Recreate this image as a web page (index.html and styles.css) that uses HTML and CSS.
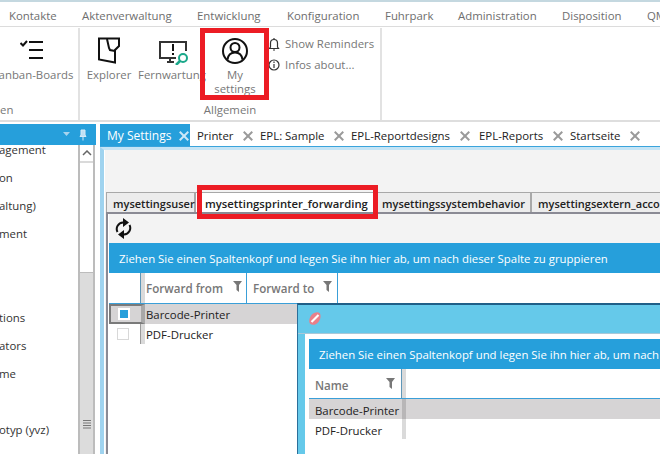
FILE: index.html
```html
<!DOCTYPE html>
<html lang="de">
<head>
<meta charset="utf-8">
<title>My Settings</title>
<link rel="stylesheet" href="styles.css">
</head>
<body>
<div class="app">
  <nav class="menu">
    <span class="m m1">Kontakte</span>
    <span class="m m2">Aktenverwaltung</span>
    <span class="m m3">Entwicklung</span>
    <span class="m m4">Konfiguration</span>
    <span class="m m5">Fuhrpark</span>
    <span class="m m6">Administration</span>
    <span class="m m7">Disposition</span>
    <span class="m m8">QM</span>
  </nav>
  <section class="ribbon">
    <div class="group g1">
      <div class="g-items g1-items">
        <div class="rbtn kanban">
          <svg class="ico" width="24" height="20" viewBox="0 0 24 20"><path d="M.5 3L3 5.500 7 1" fill="none" stroke="#111" stroke-width="2"/><path d="M9 2h14M9 10h14M9 18h14" stroke="#111" stroke-width="2"/></svg>
          <span>anban-Boards</span>
        </div>
      </div>
      <div class="g-label g1-label">en</div>
    </div>
    <div class="group g2">
      <div class="g-items g2-items">
        <div class="rbtn explorer">
          <svg class="ico" width="22" height="27" viewBox="0 0 22 27"><path d="M1 1.500H21V9L17 13V25.500L1 22.500Z" fill="none" stroke="#111" stroke-width="2"/><path d="M9 2l2 9 1 2 5 1" fill="none" stroke="#111" stroke-width="2"/></svg>
          <span>Explorer</span>
        </div>
        <div class="rbtn fern">
          <svg class="ico" width="30" height="25" viewBox="0 0 30 25"><path d="M17 18H1V2h26v9M8 22h7M11 18v4" fill="none" stroke="#333" stroke-width="2"/><path d="M14 4v7M14 13v2" stroke="#111" stroke-width="2"/><circle cx="24" cy="18" r="4" fill="#fff" stroke="#1aa88a" stroke-width="2"/><path d="M21 21l-4 4" stroke="#1aa88a" stroke-width="2.500"/></svg>
          <span>Fernwartung</span>
        </div>
        <div class="rbtn settings">
          <svg class="ico" width="26" height="26" viewBox="0 0 26 26"><circle cx="13" cy="13" r="12" fill="none" stroke="#111" stroke-width="2"/><circle cx="13" cy="9.500" r="4.500" fill="none" stroke="#111" stroke-width="2"/><path d="M5.500 21.500c.7-5 3.500-7 7.500-7s6.800 2 7.500 7" fill="none" stroke="#111" stroke-width="2"/></svg>
          <span>My<br>settings</span>
        </div>
        <div class="stack">
          <div class="srow">
            <svg width="12" height="14" viewBox="0 0 12 14"><path d="M2.500 10V6a3.500 3.500 0 0 1 7 0v4l1 1.500h-9zM5 13h2M6 1v1" fill="none" stroke="#333" stroke-width="1.200"/></svg>
            <span>Show Reminders</span>
          </div>
          <div class="srow">
            <svg width="12" height="14" viewBox="0 0 12 14"><circle cx="6" cy="7" r="5" fill="none" stroke="#333" stroke-width="1.200"/><path d="M6 6v4M6 3.500v1.500" stroke="#333" stroke-width="1.200"/></svg>
            <span>Infos about...</span>
          </div>
        </div>
      </div>
      <div class="g-label g2-label">Allgemein</div>
    </div>
  </section>
  <main class="body">
    <aside class="side">
      <div class="side-head">
        <svg width="7" height="5" viewBox="0 0 7 5"><path d="M0 0h7L3.500 4z" fill="#a8d4ee"/></svg>
        <svg class="pin" width="8" height="12" viewBox="0 0 8 12"><path d="M2 1h4v5l1 1.500H1L2 6zM4 8v3.500" fill="#bfe0f4" stroke="#d5ebf8"/></svg>
      </div>
      <div class="side-body">
        <ul class="tree">
          <li>agement</li>
          <li>on</li>
          <li>altung)</li>
          <li>ment</li>
          <li></li><li></li>
          <li>tions</li>
          <li>ators</li>
          <li>me</li>
          <li></li>
          <li>otyp (yvz)</li>
        </ul>
        <div class="sbar">
          <div class="sb-up"><svg width="10" height="6" viewBox="0 0 10 6"><path d="M1 5l4-4 4 4" fill="none" stroke="#666" stroke-width="1.500"/></svg></div>
          <div class="sb-gap"></div>
          <div class="sb-thumb"><svg width="8" height="9" viewBox="0 0 8 9"><path d="M0 .5h8M0 3h8M0 5.500h8M0 8h8" stroke="#777"/></svg></div>
        </div>
      </div>
    </aside>
    <div class="docs">
      <div class="tabs">
        <div class="tab active">My Settings<i class="x"></i></div>
        <div class="tab t-printer">Printer<i class="x"></i></div>
        <div class="tab t-sample">EPL: Sample<i class="x"></i></div>
        <div class="tab t-design">EPL-Reportdesigns<i class="x"></i></div>
        <div class="tab t-rep">EPL-Reports<i class="x"></i></div>
        <div class="tab t-start">Startseite<i class="x"></i></div>
      </div>
      <div class="doc">
        <div class="panel">
          <div class="subtabs">
            <div class="st st1">mysettingsuser</div>
            <div class="st st2 on">mysettingsprinter_forwarding</div>
            <div class="st st3">mysettingssystembehavior</div>
            <div class="st st4">mysettingsextern_accounts</div>
          </div>
          <div class="stbody">
            <div class="tool">
              <svg width="17" height="21" viewBox="0 0 17 21"><path d="M2.500 14A6.500 6.500 0 0 1 8 4.500h3" fill="none" stroke="#111" stroke-width="2"/><path d="M8 0v9l6-4.500zM9 21v-9l-6 4.500z" fill="#111"/><path d="M14.500 7A6.500 6.500 0 0 1 9 16.500H6" fill="none" stroke="#111" stroke-width="2"/></svg>
            </div>
            <div class="gbar">Ziehen Sie einen Spaltenkopf und legen Sie ihn hier ab, um nach dieser Spalte zu gruppieren</div>
            <div class="ghead">
              <div class="sel"></div>
              <div class="hc c-from"><b>Forward from</b><svg class="fn" width="9" height="11" viewBox="0 0 9 11"><path d="M0 0h9L6 4v7L3.500 9V4z" fill="#777"/></svg></div>
              <div class="hc c-to"><b>Forward to</b><svg class="fn" width="9" height="11" viewBox="0 0 9 11"><path d="M0 0h9L6 4v7L3.500 9V4z" fill="#777"/></svg></div>
            </div>
            <div class="grow selrow">
              <div class="sel"><span class="cb checked"></span></div>
              <div class="cell">Barcode-Printer</div>
            </div>
            <div class="grow">
              <div class="sel"><span class="cb"></span></div>
              <div class="cell">PDF-Drucker</div>
            </div>
          </div>
        </div>
      </div>
    </div>
  </main>
  <div class="dialog">
    <div class="d-title">
      <svg width="12" height="13" viewBox="0 0 12 13"><path d="M1.500 12c-2-1.500-1.500-6 1-9S9 -.5 10.500 1s1.500 6-1 9-6.500 3.500-8 2z" fill="#ea7f88"/><path d="M2.500 10L9.500 3" stroke="#fff" stroke-width="2.200"/></svg>
    </div>
    <div class="d-body">
      <div class="gbar d-bar">Ziehen Sie einen Spaltenkopf und legen Sie ihn hier ab, um nach dieser Spalte zu gruppieren</div>
      <div class="ghead d-head">
        <div class="hc c-name"><b>Name</b><svg class="fn" width="9" height="11" viewBox="0 0 9 11"><path d="M0 0h9L6 4v7L3.500 9V4z" fill="#777"/></svg></div>
      </div>
      <div class="d-row selrow"><div class="d-cell">Barcode-Printer</div></div>
      <div class="d-row"><div class="d-cell">PDF-Drucker</div></div>
    </div>
  </div>
  <div class="mark mark-a"></div>
  <div class="mark mark-b"></div>
</div>
</body>
</html>
```
FILE: styles.css
```css
* { box-sizing: border-box; }
html, body { margin: 0; padding: 0; }
body { font-family: "Open Sans", "Noto Sans", sans-serif; font-size: 11.4px; color: #222; background: #fff; }
.app { position: relative; width: 660px; height: 454px; overflow: hidden; display: flex; flex-direction: column; border-top: 2px solid #c4d8e0; }
svg { display: block; flex: none; }

.menu { height: 25px; flex: none; display: flex; align-items: center; padding-top: 2px; border-bottom: 1px solid #dcdcdc; color: #6e6e6e; white-space: nowrap; padding-left: 9px; }
.m { flex: none; }
.m1 { width: 73px; }
.m2 { width: 115px; }
.m3 { width: 90px; }
.m4 { width: 98px; }
.m5 { width: 73px; }
.m6 { width: 104px; }
.m7 { width: 85px; }

.ribbon { height: 95px; flex: none; display: flex; border-bottom: 2px solid #dedede; color: #777; }
.group { display: flex; flex-direction: column; border-right: 2px solid #e2e2e2; margin-top: 1px; }
.g1 { width: 80px; overflow: hidden; }
.g2 { width: 302px; }
.g-items { flex: 1; display: flex; min-height: 0; }
.g-label { height: 20px; line-height: 20px; flex: none; text-align: center; }
.g1-label { text-align: left; }
.rbtn { display: flex; flex-direction: column; align-items: center; line-height: 13.5px; text-align: center; white-space: nowrap; flex: none; }
.kanban { width: 72px; }
.kanban .ico { margin: 12px 8px 8px 0; }
.explorer { width: 48px; margin-left: 5px; }
.explorer .ico { margin: 9px 0 4px; }
.fern { width: 64px; margin-left: 7px; }
.fern .ico { margin: 12px 0 3px 3px; }
.settings { width: 62px; }
.settings .ico { margin: 10px 0 4px; }
.stack { display: flex; flex-direction: column; gap: 6px; padding-top: 8px; margin-left: 2px; }
.srow { display: flex; align-items: center; gap: 5px; height: 15px; white-space: nowrap; }

.body { flex: 1; min-height: 0; display: flex; }
.side { width: 96px; flex: none; margin-top: 2px; display: flex; flex-direction: column; }
.side-head { height: 21px; flex: none; background: #269fdb; display: flex; align-items: center; justify-content: flex-end; gap: 9px; padding-right: 9px; }
.side-body { flex: 1; display: flex; min-height: 0; overflow: hidden; }
.tree { list-style: none; margin: -9px 0 0; padding: 0; flex: 1; min-width: 0; overflow: hidden; white-space: nowrap; text-indent: -1px; }
.tree li { height: 28px; line-height: 28px; color: #333; }
.sbar { width: 17px; flex: none; margin-right: 1px; border-left: 2px solid #bcbcbc; border-right: 2px solid #bcbcbc; display: flex; flex-direction: column; }
.sb-up { height: 18px; flex: none; display: flex; align-items: center; justify-content: center; border-bottom: 2px solid #dadada; }
.sb-gap { height: 109px; flex: none; background: #fff; }
.sb-thumb { flex: 1; background: #dcdcdc; border-top: 1px solid #bcbcbc; padding: 147px 2px 0 3px; }

.docs { flex: 1; min-width: 0; margin-left: 4px; display: flex; flex-direction: column; }
.tabs { height: 25px; flex: none; display: flex; padding-top: 2px; border-bottom: 1px solid #3aa4dc; white-space: nowrap; }
.tab { display: flex; align-items: center; color: #222; flex: none; gap: 10px; padding-top: 1px; }
.tab.active { width: 90px; background: #269fdb; color: #fff; padding-left: 7px; font-size: 12px; gap: 8px; }
.t-printer { margin-left: 7px; width: 63px; }
.t-sample { width: 91px; }
.t-design { width: 128px; }
.t-rep { width: 91px; }
.t-start { width: 90px; }
.x { position: relative; display: block; width: 9px; height: 9px; flex: none; }
.x::before, .x::after { content: ""; position: absolute; left: 3.500px; top: -1.500px; width: 2px; height: 12px; background: #9a9a9a; }
.x::before { transform: rotate(45deg); }
.x::after { transform: rotate(-45deg); }
.active .x::before, .active .x::after { background: #cde8f7; }

.doc { flex: 1; min-height: 0; border-top: 3px solid #c5e4f5; border-left: 4px solid #9fd3ef; display: flex; }
.panel { flex: 1; min-width: 0; background: #f3f3f3; border-left: 1px solid #fff; padding-top: 42px; display: flex; flex-direction: column; padding-left: 1px; }
.subtabs { display: flex; height: 20px; flex: none; white-space: nowrap; overflow: hidden; }
.st { flex: none; height: 20px; line-height: 21px; background: #ececec; color: #222; border: 1px solid #a8a8a8; border-bottom: 0; padding-left: 6px; font-weight: 600; font-size: 11px; }
.st1 { width: 89px; }
.st2 { width: 180px; background: #fff; padding-left: 9px; font-size: 11.3px; }
.st3 { width: 156px; }
.st4 { width: 140px; }
.stbody { flex: 1; min-height: 0; border-left: 2px solid #8a8a94; border-top: 2px solid #8a8a94; padding-left: 1px; display: flex; flex-direction: column; background: #fff; }
.tool { height: 29px; flex: none; padding: 4px 0 0 6px; background: #f3f3f3; }
.gbar { height: 30px; flex: none; line-height: 31px; background: #269fdb; color: #fff; padding-left: 10px; white-space: nowrap; overflow: hidden; }
.ghead { height: 31px; flex: none; display: flex; background: #fff; border-bottom: 1px solid #3a9fd8; }
.sel { width: 36px; flex: none; display: flex; align-items: center; justify-content: center; padding-right: 4px; border-right: 4px solid #dadada; }
.ghead .sel { box-shadow: inset -1px 0 0 #5f97b8; }
.grow .sel { box-shadow: inset -1px 0 0 #9a9a9a; }
.hc { display: flex; align-items: center; justify-content: space-between; color: #777; }
.hc b { font-weight: 600; font-size: 11.6px; margin-top: 1px; }
.c-from { width: 102px; padding: 0 4px 0 1px; border-right: 1px solid #3a9fd8; }
.c-to { width: 91px; padding: 0 5px 0 6px; border-right: 1px solid #3a9fd8; }
.fn { margin-top: -3px; }
.grow { height: 20px; flex: none; display: flex; background: #fff; }
.selrow { background: #d6d4d5; }
.grow.selrow .sel { border: 2px solid #7a7a7a; border-right: 4px solid #a8a8a8; box-shadow: none; }
.cell { padding-left: 1px; height: 20px; line-height: 22px; color: #222; }
.cb { display: block; width: 12px; height: 12px; border: 1px solid #d8d8d8; background: #fff; }
.cb.checked { border: 2px solid #fff; background: #269fdb; }

.dialog { position: absolute; left: 297px; top: 301px; width: 363px; height: 153px; background: #65c9ea; border-left: 1px solid #2b6f9a; border-top: 2px solid #1f5f88; display: flex; flex-direction: column; }
.d-title { height: 29px; flex: none; padding: 7px 0 0 11px; border-bottom: 1px solid #a8c8d8; }
.d-body { flex: 1; min-height: 0; background: #fff; margin-left: 7px; padding: 5px 0 0 4px; display: flex; flex-direction: column; }
.d-bar { flex: none; }
.d-head { flex: none; height: 30px; }
.c-name { width: 97px; padding: 0 7px 0 6px; border-right: 4px solid #dadada; box-shadow: inset -1px 0 0 #5f97b8; }
.c-name b { margin-top: 3px; }
.c-name .fn { margin-top: -1px; }
.d-row { height: 20px; flex: none; }
.d-cell { width: 97px; height: 20px; padding-left: 6px; line-height: 23px; border-right: 4px solid #dadada; white-space: nowrap; color: #222; }
.selrow .d-cell { border-right-color: #b8b6b7; }

.mark { position: absolute; border: 5px solid #ec1c24; pointer-events: none; }
.mark-a { left: 200px; top: 26px; width: 69px; height: 72px; }
.mark-b { left: 197px; top: 183px; width: 181px; height: 34px; }
```
